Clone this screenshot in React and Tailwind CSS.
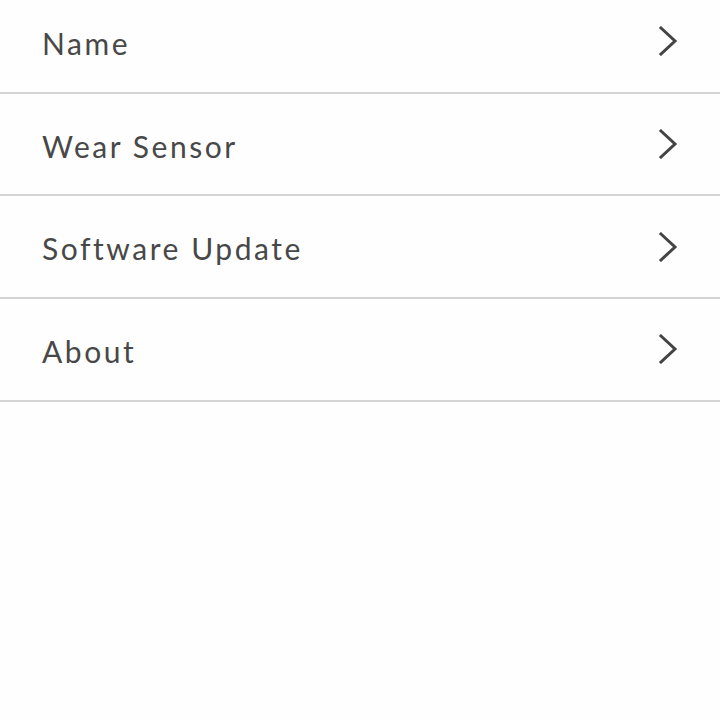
const ITEMS = ['Name', 'Wear Sensor', 'Software Update', 'About'];

function Chevron() {
    return (
        <svg width="22" height="30" viewBox="0 0 22 30" fill="none" className="text-[#444444]">
            <path d="M3 2l14 13L3 28" stroke="currentColor" strokeWidth="3" strokeLinecap="square" strokeLinejoin="miter" />
        </svg>
    );
}

export default function App() {
    return (
        <div className="w-[720px] h-[720px] bg-[#fefefe] overflow-hidden" style={{ fontFamily: 'Lato, "Noto Sans", sans-serif' }}>
            <div className="-mt-[9px]">
                {ITEMS.map((item) => (
                    <div
                        key={item}
                        className="h-[102.7px] flex items-center justify-between pl-[42px] pr-[40px] border-b-2 border-[#d4d4d4]">
                        <span className="text-[30px] tracking-[0.085em] text-[#484848] pt-[4px]">{item}</span>
                        <Chevron />
                    </div>
                ))}
            </div>
        </div>
    );
}
